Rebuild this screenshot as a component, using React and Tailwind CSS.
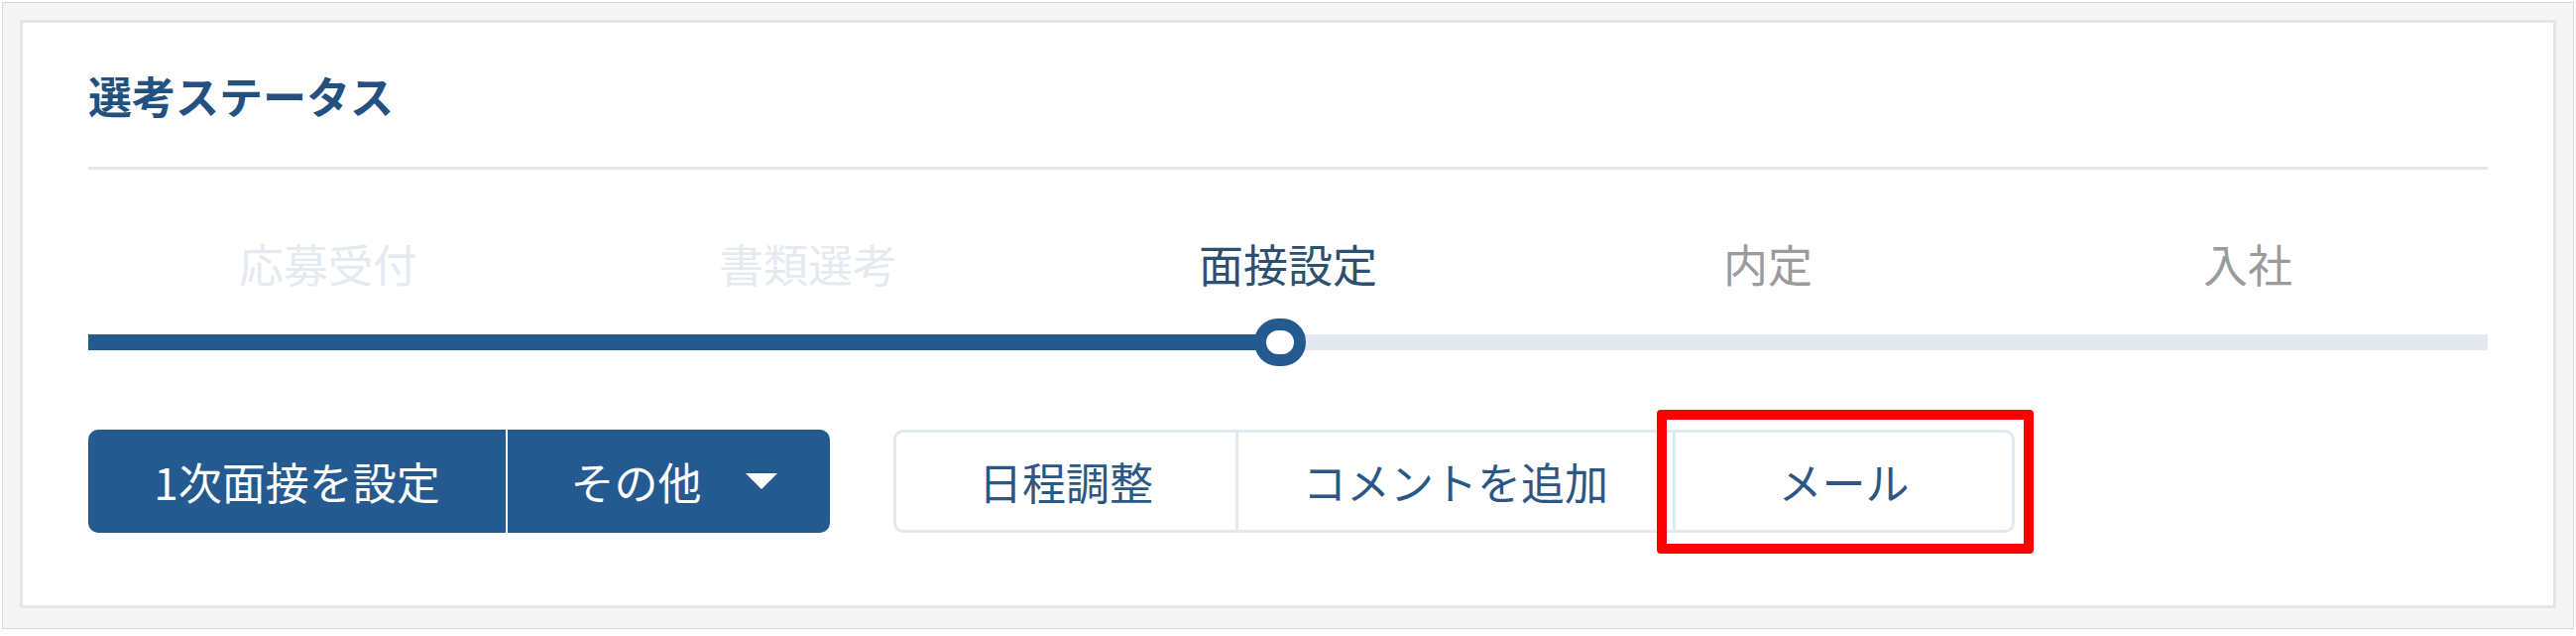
export default function App() {
  const labels = [
    { t: "応募受付", c: "text-[#e4eaf0]" },
    { t: "書類選考", c: "text-[#e4eaf0]" },
    { t: "面接設定", c: "text-[#2d4f72]" },
    { t: "内定", c: "text-[#9b9b9b]" },
    { t: "入社", c: "text-[#9b9b9b]" },
  ];
  return (
    <div
      className="w-[2598px] h-[641px] bg-white pt-[2px] px-[2px]"
      style={{ fontFamily: '"Noto Sans CJK JP", "Noto Sans", sans-serif' }}
    >
      <div className="h-[632px] border border-[#dadada] bg-[#f5f5f5] pt-[17px] px-[17px] pb-[20px]">
        <div className="h-full border-[3px] border-[#e5e5e5] bg-white px-[66px] pt-[43px]">
          <div className="text-[44px] leading-[60px] font-bold text-[#22517f]">選考ステータス</div>
          <div className="mt-[42px] h-[3px] bg-[#e6e6e6]" />
          <div className="mt-[65px] grid grid-cols-5">
            {labels.map((l) => (
              <div key={l.t} className={`text-center text-[45px] leading-[60px] ${l.c}`}>
                {l.t}
              </div>
            ))}
          </div>
          <div className="mt-[25px] h-[48px] flex items-center">
            <div className="relative w-full h-[16px] bg-[#e3e9ef]">
              <div className="absolute left-0 top-0 h-full w-1/2 bg-[#245a8f]" />
              <div className="absolute left-[calc(50%-34px)] top-[-16px] w-[52px] h-[48px] rounded-full border-[12px] border-[#245a8f] bg-white" />
            </div>
          </div>
          <div className="mt-[64px] flex items-center">
            <div className="flex h-[104px] rounded-[10px] overflow-hidden bg-[#245a8f] text-white text-[44px]">
              <div className="w-[421px] flex items-center justify-center">1次面接を設定</div>
              <div className="w-[2px] bg-white" />
              <div className="w-[325px] flex items-center justify-center gap-[44px] pl-[10px]">
                <span>その他</span>
                <svg width="32" height="16" viewBox="0 0 32 16">
                  <polygon points="0,0 32,0 16,16" fill="white" />
                </svg>
              </div>
            </div>
            <div className="ml-[64px] flex h-[104px] rounded-[10px] border-[3px] border-[#e1e8ef] text-[#2a5786] text-[44px]">
              <div className="w-[342px] flex items-center justify-center">日程調整</div>
              <div className="w-[441px] border-l-[3px] border-[#e1e8ef] flex items-center justify-center">
                コメントを追加
              </div>
              <div className="relative w-[342px] border-l-[3px] border-[#e1e8ef] flex items-center justify-center">
                メール
                <div className="absolute -top-[23px] -left-[19px] -right-[22px] -bottom-[24px] border-[10px] border-[#ff0000] rounded-[4px]" />
              </div>
            </div>
          </div>
        </div>
      </div>
    </div>
  );
}
